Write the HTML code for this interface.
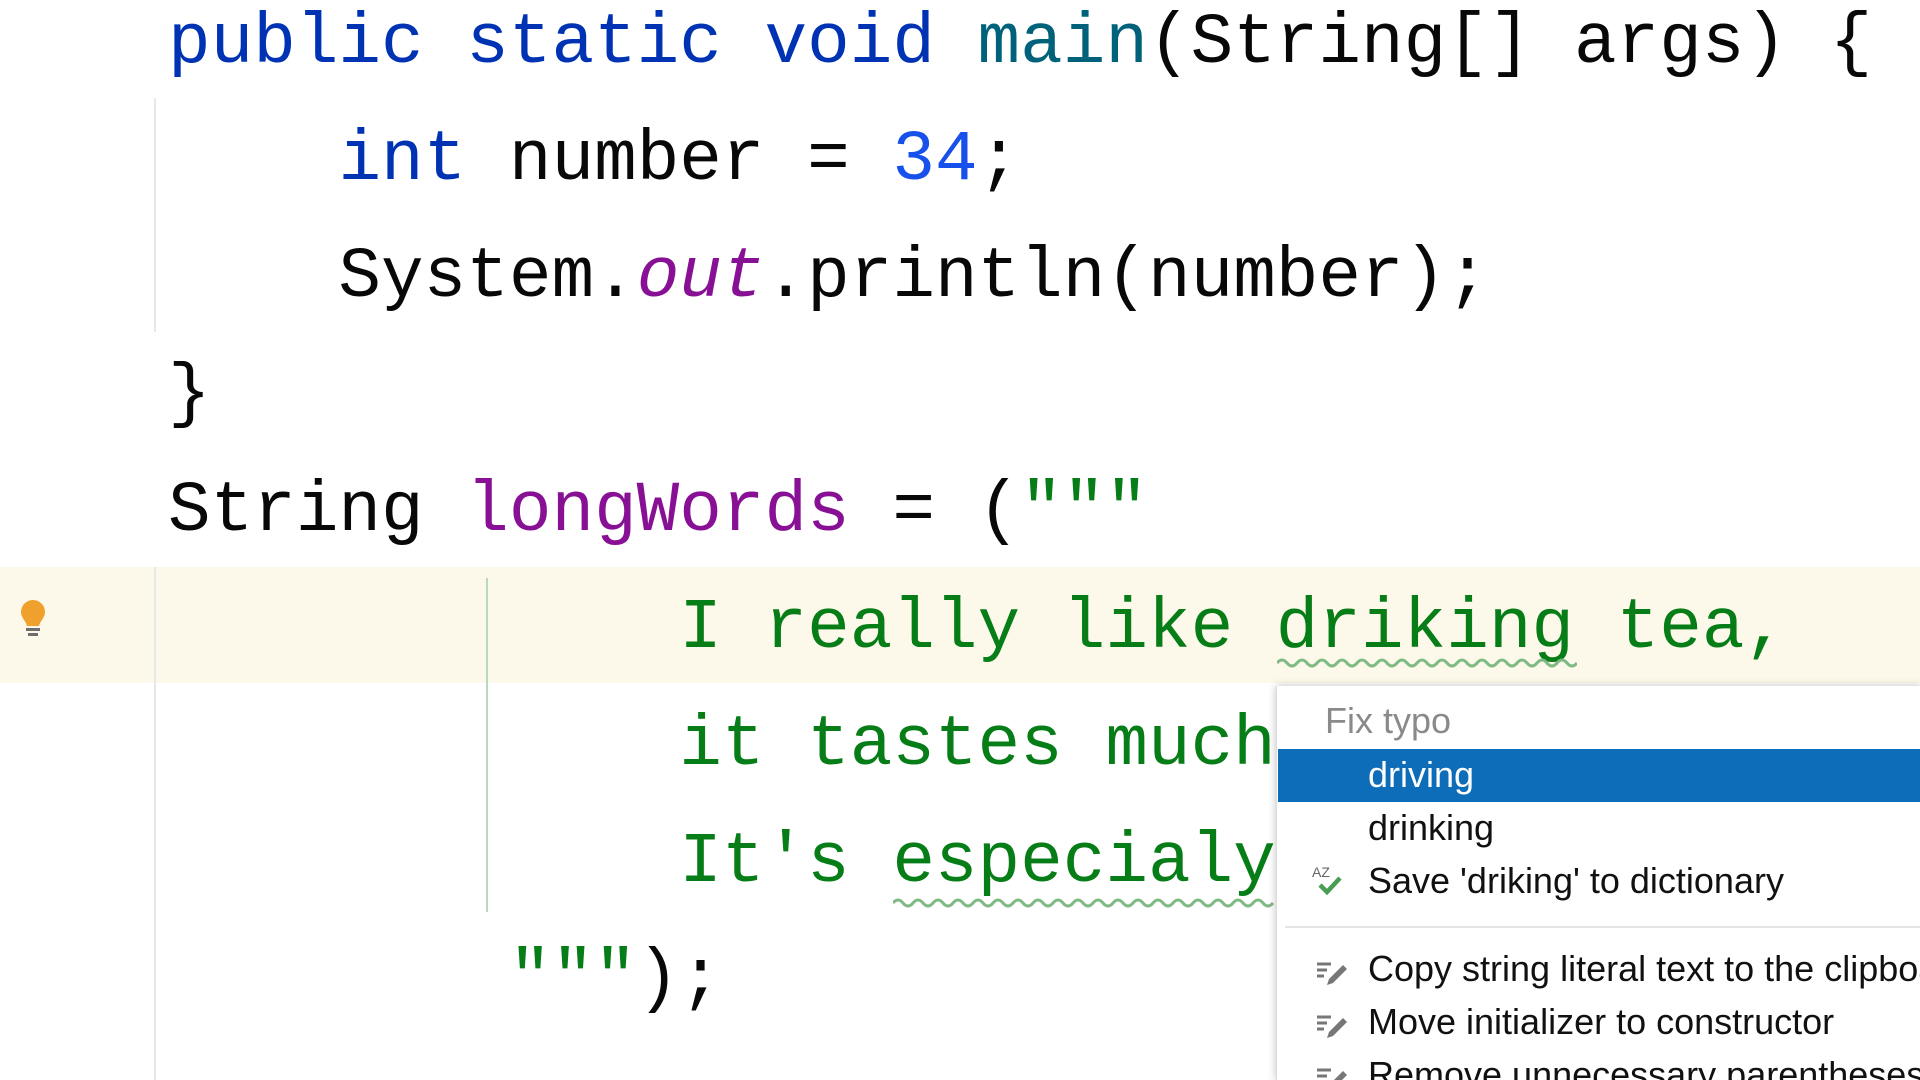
<!DOCTYPE html>
<html style="overflow:hidden"><head><meta charset="utf-8"><style>
html,body{width:1920px;height:1080px;}
body{margin:0;overflow:hidden;background:#fff;position:relative;font-family:"Liberation Mono",monospace;}
.l{position:absolute;left:168px;font-size:71px;line-height:117px;height:117px;white-space:pre;color:#080808;}
.k{color:#0033b3}.n{color:#1750eb}.p{color:#871094}.i{font-style:italic}.s{color:#067d17}
.m{position:absolute;font-family:"Liberation Sans",sans-serif;font-size:36px;white-space:pre;color:#111;}
</style></head><body>
<div style="position:absolute;left:0;top:567px;width:1920px;height:116px;background:#fcf9ea"></div>
<div style="position:absolute;left:154px;top:98px;width:2px;height:234px;background:#e8e8e8"></div>
<div style="position:absolute;left:154px;top:567px;width:2px;height:513px;background:#e8e8e8"></div>
<div style="position:absolute;left:486px;top:578px;width:2px;height:334px;background:#b9d9bc"></div>
<svg style="position:absolute;left:18px;top:598px" width="30" height="42" viewBox="0 0 30 42"><path d="M15 2a12 12 0 0 0-12 12c0 6 5 9 6 14h12c1-5 6-8 6-14A12 12 0 0 0 15 2z" fill="#f0a02c"/><rect x="8" y="30" width="14" height="3" fill="#6e6e6e"/><rect x="10" y="35" width="10" height="3" fill="#6e6e6e"/></svg>

<div class="l" style="top:-14px"><span class="k">public static void</span> <span style="color:#00627a">main</span>(String[] args) {</div>
<div class="l" style="top:103px">    <span class="k">int</span> number = <span class="n">34</span>;</div>
<div class="l" style="top:220px">    System.<span class="p i">out</span>.println(number);</div>
<div class="l" style="top:337px">}</div>
<div class="l" style="top:454px">String <span class="p">longWords</span> = (<span class="s">"""</span></div>
<div class="l s" style="top:571px">            I really like driking tea,</div>
<div class="l s" style="top:688px">            it tastes much better</div>
<div class="l s" style="top:805px">            It's especialy good</div>
<div class="l" style="top:922px">        <span class="s">"""</span>);</div>

<svg style="position:absolute;left:1277px;top:656px" width="300" height="14"><path d="M0 7 q5 -6 10 0 t10 0 t10 0 t10 0 t10 0 t10 0 t10 0 t10 0 t10 0 t10 0 t10 0 t10 0 t10 0 t10 0 t10 0 t10 0 t10 0 t10 0 t10 0 t10 0 t10 0 t10 0 t10 0 t10 0 t10 0 t10 0 t10 0 t10 0 t10 0 t10 0" fill="none" stroke="#7fba85" stroke-width="3"/></svg>
<svg style="position:absolute;left:893px;top:896px" width="384" height="14"><path d="M0 7 q5 -6 10 0 t10 0 t10 0 t10 0 t10 0 t10 0 t10 0 t10 0 t10 0 t10 0 t10 0 t10 0 t10 0 t10 0 t10 0 t10 0 t10 0 t10 0 t10 0 t10 0 t10 0 t10 0 t10 0 t10 0 t10 0 t10 0 t10 0 t10 0 t10 0 t10 0 t10 0 t10 0 t10 0 t10 0 t10 0 t10 0 t10 0 t10 0" fill="none" stroke="#7fba85" stroke-width="3"/></svg>

<div style="position:absolute;left:1276px;top:686px;width:644px;height:394px;background:#fff;box-shadow:0 0 8px rgba(0,0,0,.25);border-left:1px solid #ddd;overflow:hidden">
<div style="position:absolute;left:1px;top:63px;width:660px;height:53px;background:#0d6db8"></div>
<div class="m" style="left:48px;top:14px;color:#8a8a8a">Fix typo</div>
<div class="m" style="left:91px;top:68px;color:#fff">driving</div>
<div class="m" style="left:91px;top:121px">drinking</div>
<div class="m" style="left:91px;top:174px">Save 'driking' to dictionary</div>
<div style="position:absolute;left:8px;top:240px;width:660px;height:2px;background:#e4e4e4"></div>
<div class="m" style="left:91px;top:262px">Copy string literal text to the clipboard</div>
<div class="m" style="left:91px;top:315px">Move initializer to constructor</div>
<div class="m" style="left:91px;top:368px">Remove unnecessary parentheses</div>
<svg style="position:absolute;left:34px;top:178px" width="40" height="36"><text x="1" y="13" font-family="Liberation Sans" font-size="14" fill="#666">AZ</text><path d="M9 21l7 7 13-14" fill="none" stroke="#4a9d55" stroke-width="4.5"/></svg>
<svg style="position:absolute;left:38px;top:270px" width="36" height="34"><path d="M2 8h14M2 14h10M2 20h7" stroke="#777" stroke-width="3"/><path d="M12 29l2-6 14-14 4 4-14 14z" fill="#777"/></svg>
<svg style="position:absolute;left:38px;top:323px" width="36" height="34"><path d="M2 8h14M2 14h10M2 20h7" stroke="#777" stroke-width="3"/><path d="M12 29l2-6 14-14 4 4-14 14z" fill="#777"/></svg>
<svg style="position:absolute;left:38px;top:376px" width="36" height="34"><path d="M2 8h14M2 14h10M2 20h7" stroke="#777" stroke-width="3"/><path d="M12 29l2-6 14-14 4 4-14 14z" fill="#777"/></svg>
</div>
</body></html>
